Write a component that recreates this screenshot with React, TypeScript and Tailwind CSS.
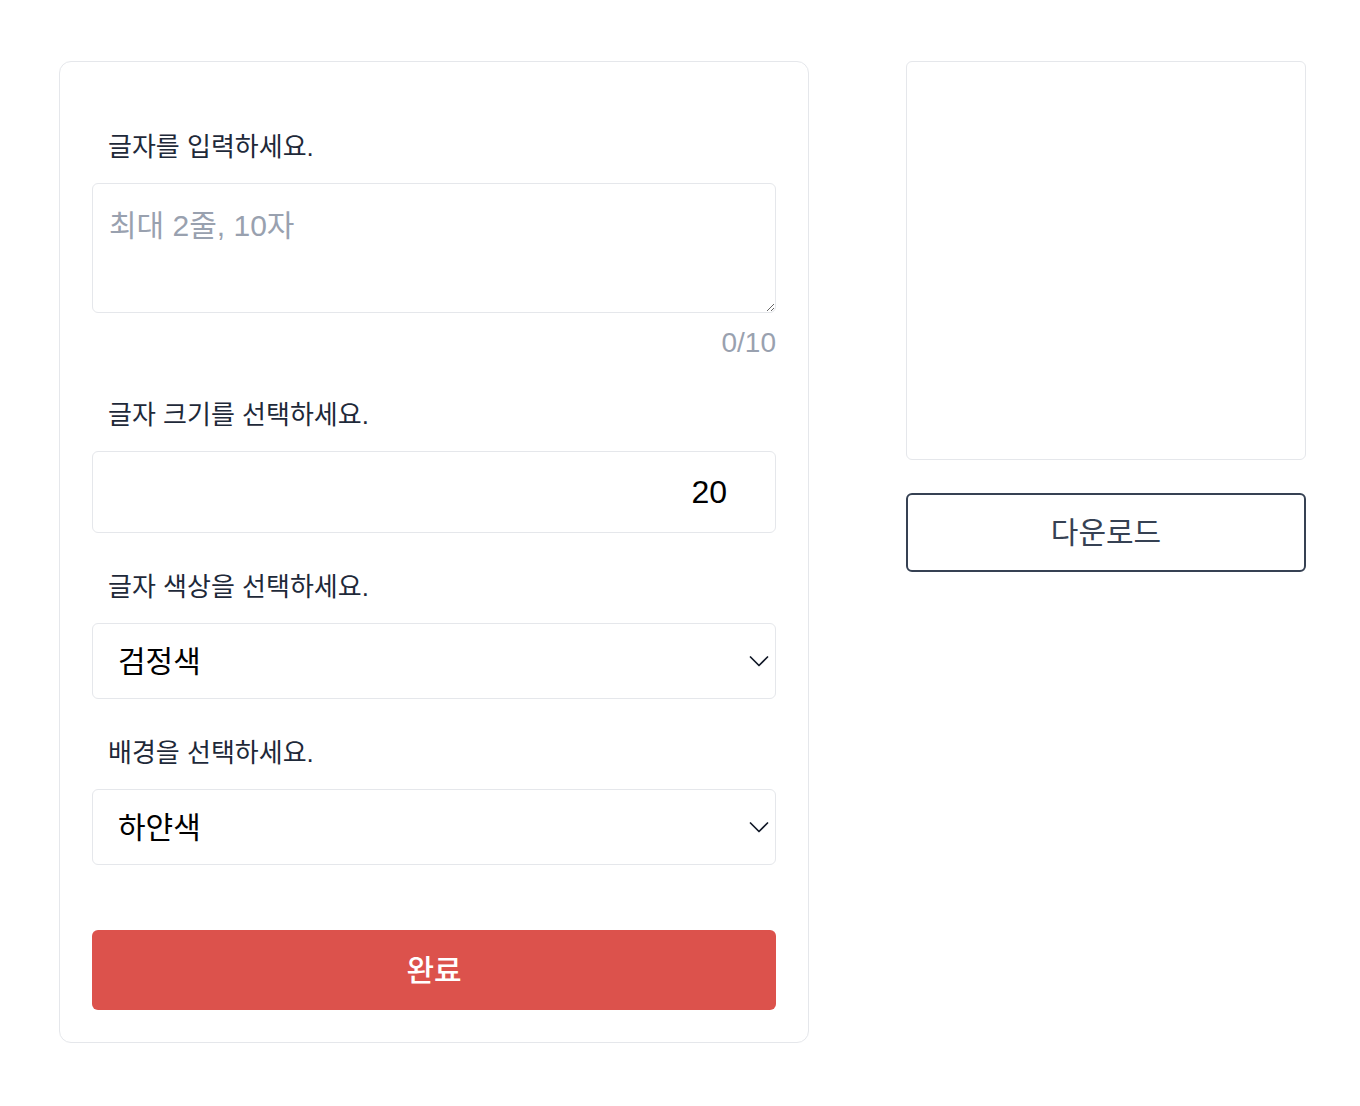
import { useState } from 'react';

const font = { fontFamily: '"Liberation Sans", "Noto Sans CJK KR", sans-serif' };

function Chevron() {
  return (
    <svg
      className="pointer-events-none absolute right-[7px] top-1/2 -translate-y-1/2"
      width="20"
      height="12"
      viewBox="0 0 20 12"
      fill="none"
      stroke="#111827"
      strokeWidth="1.7"
      strokeLinecap="round"
      strokeLinejoin="round"
    >
      <path d="M1.5 2 L10 10.5 L18.5 2" />
    </svg>
  );
}

export default function App() {
  const [text, setText] = useState('');
  const [size, setSize] = useState('20');
  const [color, setColor] = useState('black');
  const [bg, setBg] = useState('white');

  return (
    <div className="min-h-screen bg-white" style={font}>
      <div className="flex items-start gap-[97px] pl-[59px] pt-[61px]">
        <div className="w-[750px] rounded-xl border border-gray-200 p-8">
          <label className="mt-[33px] block h-9 pl-4 text-[26px] leading-[40px] text-gray-800">글자를 입력하세요.</label>
          <textarea
            value={text}
            maxLength={10}
            onChange={(e) => setText(e.target.value)}
            placeholder="최대 2줄, 10자"
            className="mt-5 block h-[130px] w-full rounded-md border border-gray-200 px-4 pt-[21px] text-[30px] leading-[42px] text-gray-800 placeholder:text-gray-400 focus:outline-none"
          />
          <div className="mt-3 h-9 text-right text-[28px] leading-9 text-gray-400">{text.length}/10</div>

          <label className="mt-[34px] block h-9 pl-4 text-[26px] leading-[40px] text-gray-800">글자 크기를 선택하세요.</label>
          <input
            type="text"
            value={size}
            onChange={(e) => setSize(e.target.value)}
            className="mt-5 block h-[82px] w-full rounded-md border border-gray-200 pr-[48px] text-right text-[32px] text-black focus:outline-none"
          />

          <label className="mt-[34px] block h-9 pl-4 text-[26px] leading-[40px] text-gray-800">글자 색상을 선택하세요.</label>
          <div className="relative mt-5">
            <select
              value={color}
              onChange={(e) => setColor(e.target.value)}
              className="block h-[76px] w-full appearance-none rounded-md border border-gray-200 bg-white pl-[25px] text-[30px] text-black focus:outline-none"
            >
              <option value="black">검정색</option>
              <option value="white">하얀색</option>
              <option value="red">빨간색</option>
            </select>
            <Chevron />
          </div>

          <label className="mt-[34px] block h-9 pl-4 text-[26px] leading-[40px] text-gray-800">배경을 선택하세요.</label>
          <div className="relative mt-5">
            <select
              value={bg}
              onChange={(e) => setBg(e.target.value)}
              className="block h-[76px] w-full appearance-none rounded-md border border-gray-200 bg-white pl-[25px] text-[30px] text-black focus:outline-none"
            >
              <option value="white">하얀색</option>
              <option value="black">검정색</option>
            </select>
            <Chevron />
          </div>

          <button className="mt-[65px] block h-20 w-full rounded-md bg-[#dc524c] text-[30px] font-medium text-white">
            완료
          </button>
        </div>

        <div className="flex w-[400px] flex-col gap-[33px]">
          <div className="h-[399px] w-full rounded-md border border-gray-200" />
          <button className="h-[79px] w-full rounded-md border-2 border-gray-700 text-[30px] text-gray-700">
            다운로드
          </button>
        </div>
      </div>
    </div>
  );
}
